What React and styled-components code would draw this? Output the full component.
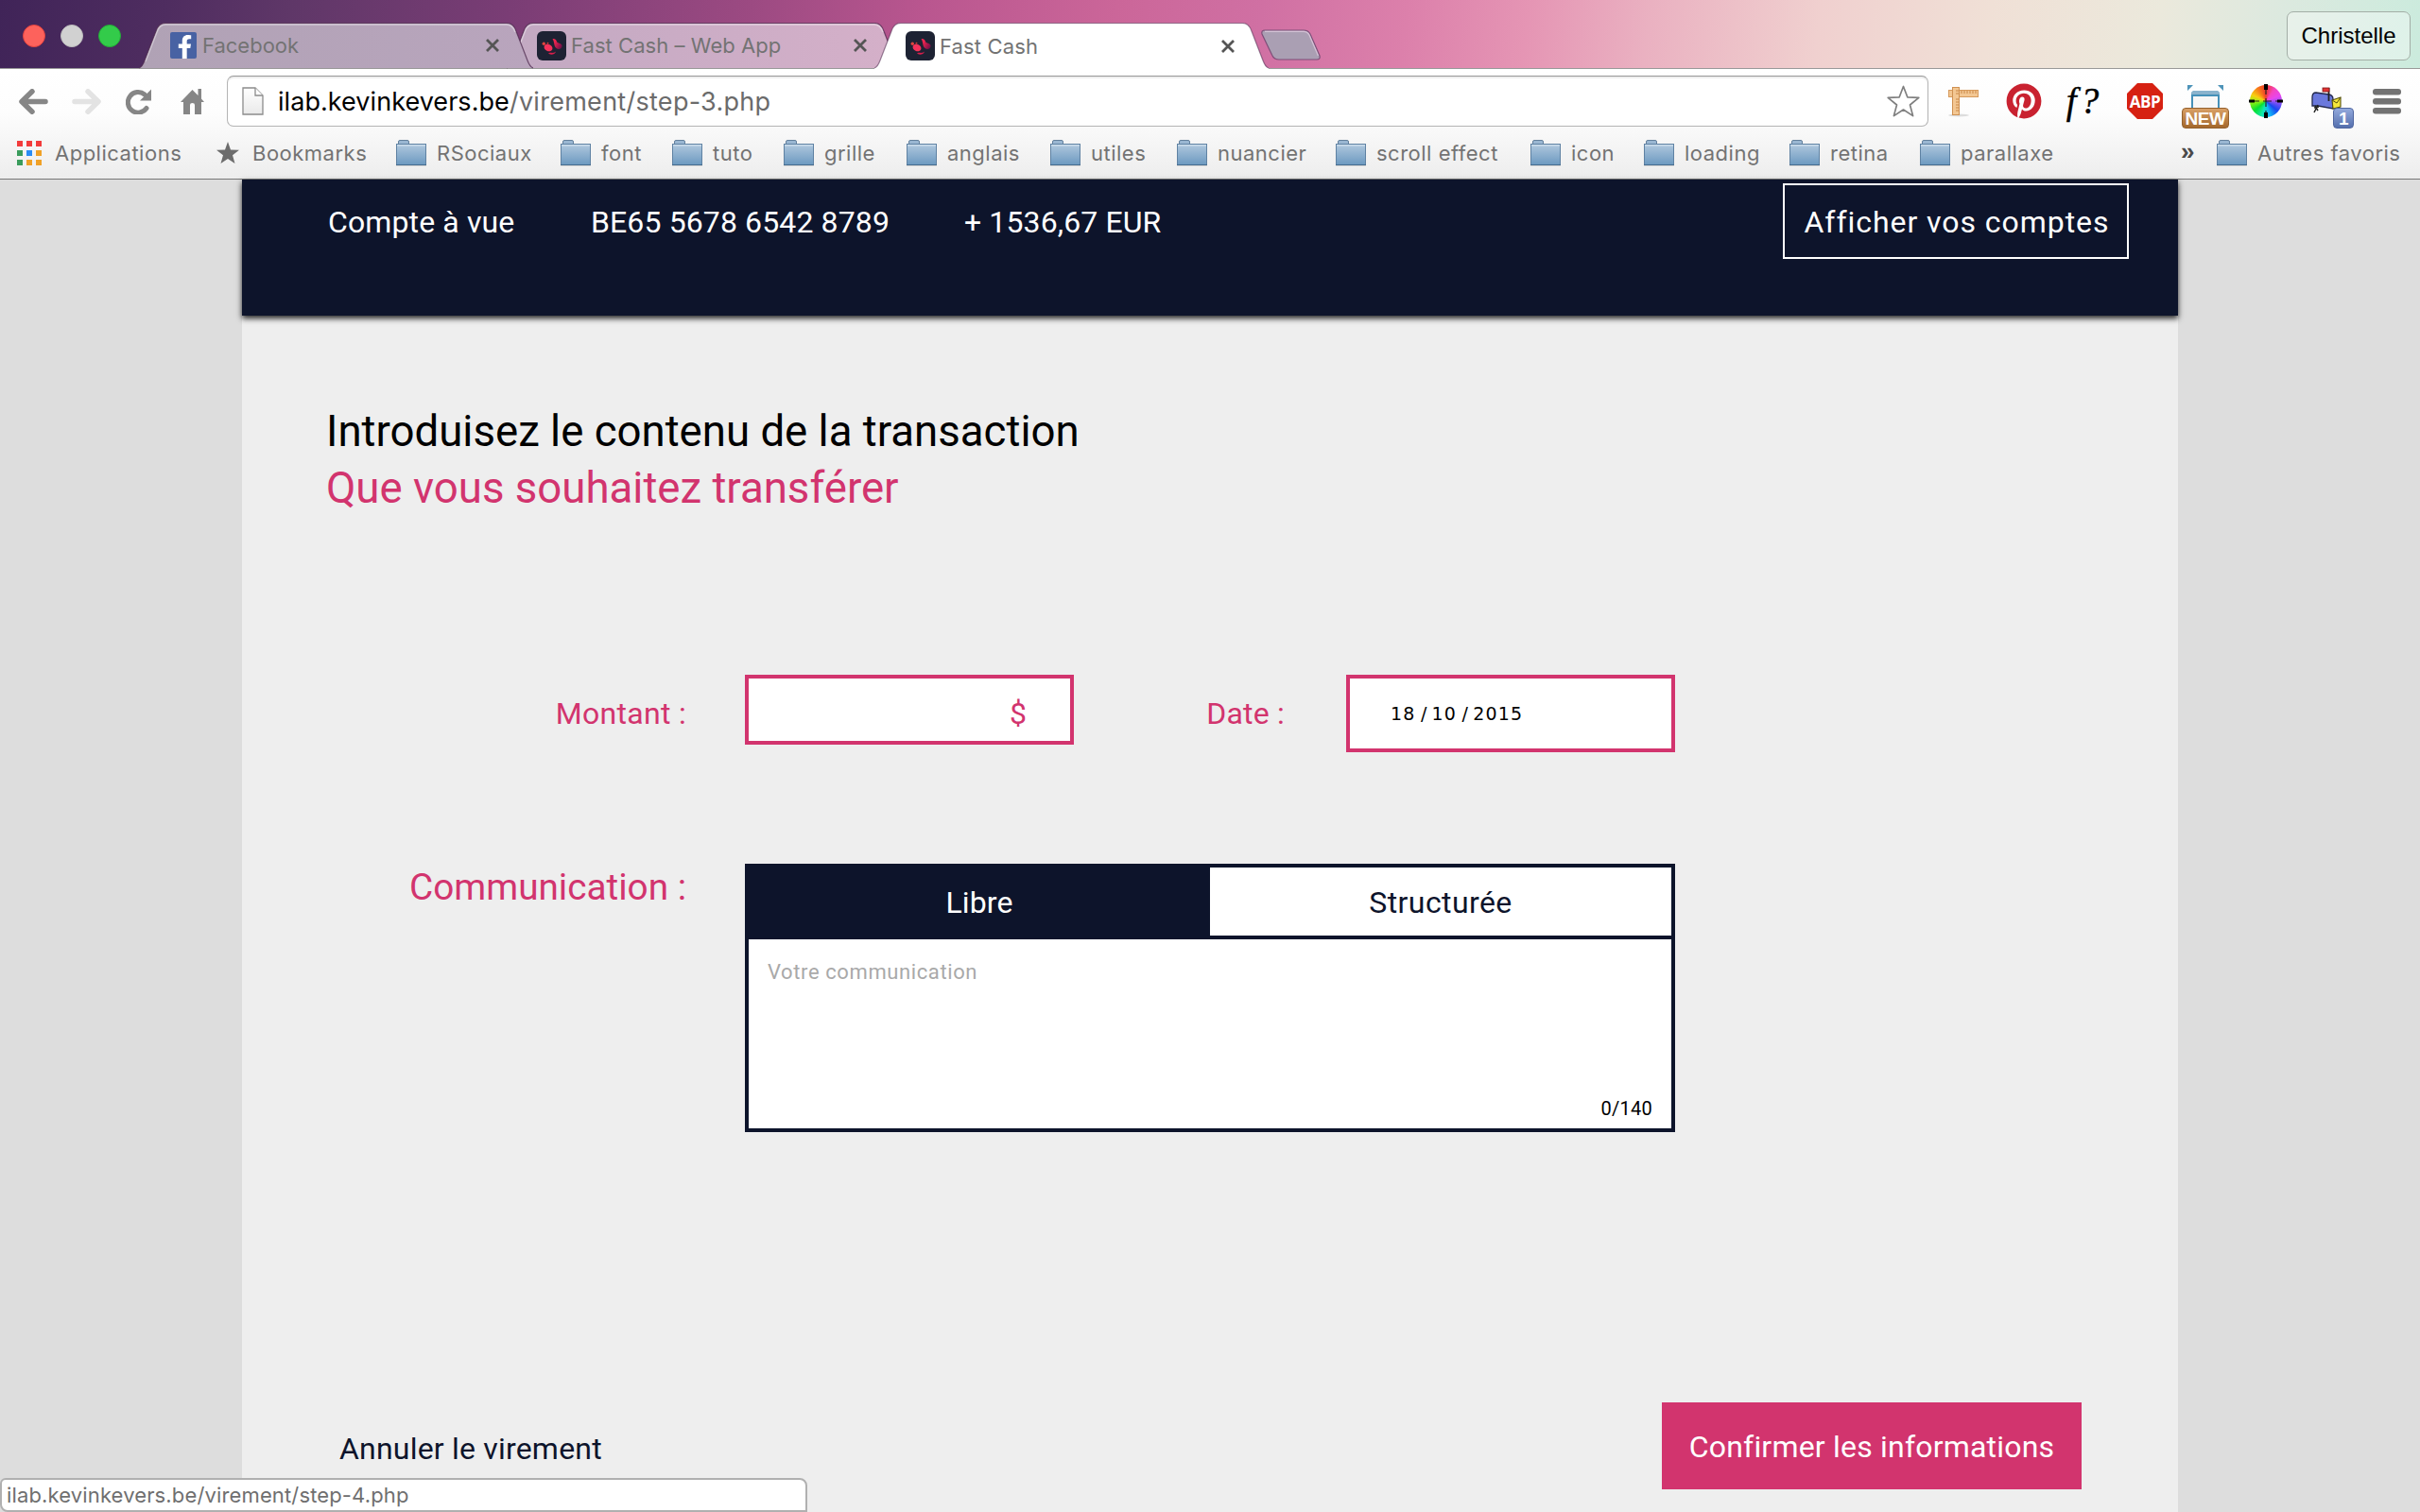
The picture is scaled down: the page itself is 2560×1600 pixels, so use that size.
import React from "react";
import styled, { createGlobalStyle } from "styled-components";
import { FaFacebookF, FaPinterest } from "react-icons/fa";

const NAVY = "#0d142b";
const PINK = "#d2346e";
const UI = `Inter, "Liberation Sans", sans-serif`;
const BODY = `Roboto, "Liberation Sans", sans-serif`;

const GlobalStyle = createGlobalStyle`
  *, *::before, *::after { box-sizing: border-box; }
  html, body { margin: 0; padding: 0; }
  body { background: #ddd; font-family: ${BODY}; overflow: hidden; }
  svg { display: block; flex: none; }
`;

const Window = styled.div`
  width: 2560px;
  height: 1600px;
  overflow: hidden;
  display: flex;
  flex-direction: column;
`;

/* ---------- Tab strip ---------- */

const TabStrip = styled.header`
  height: 72px;
  flex: none;
  display: flex;
  align-items: flex-end;
  background: linear-gradient(
    98deg,
    #402458 0%, #4f2d60 7%, #5f3768 12%, #7a3d75 21%, #9c4a82 31%, #b9568f 38%,
    #cb6699 46%, #d070a3 52%, #dc80ab 58%, #e595b4 63%, #eab1c1 68%, #f0d0cf 75%,
    #f0e0d6 82%, #ebe9dc 89%, #dce9df 94%, #cbebdd 100%
  );
`;

const Lights = styled.div`
  width: 147px;
  height: 72px;
  padding: 26px 0 0 24px;
  display: flex;
  gap: 16px;
`;

const Light = styled.span`
  width: 24px;
  height: 24px;
  border-radius: 50%;
  background: ${(p) => p.$fill};
  border: 1px solid ${(p) => p.$edge};
`;

const TabBox = styled.div`
  position: relative;
  z-index: ${(p) => p.$level};
  width: 417px;
  height: ${(p) => (p.$active ? 49 : 48)}px;
  margin-right: -28px;
  margin-bottom: ${(p) => (p.$active ? -1 : 0)}px;
  padding: 0 35px 0 ${(p) => p.$inset}px;
  display: flex;
  align-items: center;
`;

const TabShape = styled.svg`
  position: absolute;
  left: 0;
  top: 0;
`;

const TabTitle = styled.span`
  position: relative;
  flex: 1;
  padding-left: ${(p) => p.$gap}px;
  font: 22px/30px ${UI};
  letter-spacing: ${(p) => p.$ls}px;
  color: #737373;
  white-space: nowrap;
`;

const Layer = styled.span`
  position: relative;
  display: flex;
`;

const FacebookMark = styled.span`
  position: relative;
  width: 28px;
  height: 28px;
  border-radius: 2px;
  background: #4862a3;
  display: flex;
  justify-content: flex-end;
  align-items: flex-end;
  padding-right: 0;
  overflow: hidden;
  color: #fff;
`;

const NewTab = styled.svg`
  margin: 0 0 8px 19px;
`;

const Profile = styled.button`
  margin: 0 10px 8px auto;
  width: 131px;
  height: 52px;
  padding: 0;
  border: 1px solid #a3aea6;
  border-radius: 7px;
  background: rgba(255, 255, 255, 0.36);
  font: 24px/48px "Liberation Sans", sans-serif;
  color: #000;
`;

/* ---------- Toolbar ---------- */

const Chrome = styled.div`
  height: 118px;
  flex: none;
  border-top: 1px solid #999;
  border-bottom: 1px solid #777;
  background: linear-gradient(#fff 0%, #fdfdfd 40%, #ededed 100%);
`;

const Toolbar = styled.div`
  height: 61px;
  padding: 7px 0 0 7px;
  display: flex;
  align-items: center;
`;

const NavSlot = styled.span`
  width: 56px;
  display: flex;
  justify-content: center;
`;

const Omnibox = styled.div`
  width: 1800px;
  height: 54px;
  margin: 0 5px 0 9px;
  padding: 0 8px 0 15px;
  display: flex;
  align-items: center;
  border: 1px solid #b4b4b4;
  border-top-color: #979797;
  border-radius: 7px;
  background: #fff;
  box-shadow: inset 0 2px 1px #eee;
`;

const Address = styled.span`
  flex: 1;
  padding: 2px 0 0 15px;
  font: 27px/36px ${UI};
  letter-spacing: 0.05px;
  color: #000;
`;

const AddressPath = styled.span`
  letter-spacing: 0.28px;
  color: #6b6b6b;
`;

const ExtSlot = styled.span`
  position: relative;
  width: 64px;
  height: 54px;
  display: flex;
  align-items: center;
  justify-content: center;
`;

const FontQuery = styled.span`
  font: italic 39px/44px "Liberation Serif", serif;
  -webkit-text-stroke: 0.4px #000;
  letter-spacing: 4px;
  color: #000;
`;

const StopLabel = styled.span`
  width: 38px;
  height: 38px;
  clip-path: polygon(29% 0, 71% 0, 100% 29%, 100% 71%, 71% 100%, 29% 100%, 0 71%, 0 29%);
  background: #d62112;
  color: #fff;
  text-align: center;
  font: bold 17px/39px "Open Sans", sans-serif;
  letter-spacing: -0.5px;
`;

const Badge = styled.span`
  position: absolute;
  left: ${(p) => p.$left}px;
  top: 34px;
  width: ${(p) => p.$width}px;
  height: 22px;
  border: 1px solid ${(p) => p.$edge};
  border-radius: 4px;
  background: linear-gradient(${(p) => p.$from}, ${(p) => p.$to});
  color: #fff;
  text-align: center;
  font: bold 19px/21px "Liberation Sans", sans-serif;
  letter-spacing: -0.4px;
`;

const Wheel = styled.span`
  width: 34px;
  height: 34px;
  border-radius: 50%;
  background: conic-gradient(
    #f0382c 0deg, #f545c0 35deg, #e646f0 70deg, #7a50f5 100deg, #1848f0 130deg,
    #10b8f8 165deg, #10e8b0 195deg, #08e030 230deg, #90f010 265deg, #f8d010 295deg,
    #f88018 325deg, #f0382c 360deg
  );
`;

const WheelSpokes = styled.svg`
  position: absolute;
  left: 14px;
  top: 9px;
`;

/* ---------- Bookmarks ---------- */

const BookmarksBar = styled.nav`
  height: 55px;
  padding: 0 22px 0 18px;
  display: flex;
  align-items: center;
`;

const Bookmark = styled.span`
  width: ${(p) => p.$width}px;
  display: flex;
  align-items: center;
  gap: ${(p) => p.$gap ?? 11}px;
  font: 22px/30px ${UI};
  letter-spacing: 0.5px;
  color: #737373;
  white-space: nowrap;
`;

const Overflow = styled.span`
  margin-left: auto;
  width: 38px;
  font: bold 26px/30px "Liberation Sans", sans-serif;
  color: #4a4a4a;
  padding-bottom: 3px;
`;

/* ---------- Page ---------- */

const Page = styled.main`
  width: 2048px;
  flex: 1;
  min-height: 0;
  margin: 0 auto;
  background: #eee;
  font-family: ${BODY};
  font-size: 32px;
`;

const AccountBar = styled.section`
  height: 144px;
  padding: 4px 52px 0 91px;
  display: flex;
  align-items: flex-start;
  background: ${NAVY};
  box-shadow: 0 3px 6px rgba(0, 0, 0, 0.85);
  color: #fff;
`;

const AccountCell = styled.span`
  width: ${(p) => p.$width}px;
  line-height: 82px;
  letter-spacing: 0.12px;
  white-space: nowrap;
`;

const OutlineButton = styled.button`
  margin-left: auto;
  width: 366px;
  height: 80px;
  padding: 0 0 0 2px;
  border: 2px solid #fff;
  background: transparent;
  color: #fff;
  font: 32px/78px ${BODY};
  letter-spacing: 0.95px;
`;

const Heading = styled.h1`
  margin: 0;
  padding: 93px 0 0 89px;
  font-size: 45.6px;
  line-height: 60px;
  font-weight: 400;
  color: #000;
`;

const Accent = styled.span`
  display: block;
  color: ${PINK};
`;

const FormRow = styled.div`
  display: flex;
  align-items: flex-start;
  margin-top: ${(p) => p.$top}px;
`;

const Label = styled.label`
  width: ${(p) => p.$width}px;
  padding-right: ${(p) => p.$gap}px;
  text-align: right;
  font-size: ${(p) => p.$size ?? 32}px;
  line-height: ${(p) => p.$line ?? 82}px;
  letter-spacing: ${(p) => p.$ls ?? 0}px;
  color: ${PINK};
`;

const Field = styled.div`
  width: 348px;
  height: ${(p) => p.$height}px;
  border: 4px solid ${PINK};
  background: #fff;
  display: flex;
`;

const Currency = styled.span`
  margin-left: auto;
  padding-right: 46px;
  line-height: 74px;
  color: ${PINK};
`;

const DateValue = styled.span`
  padding-left: 43px;
  display: flex;
  font: 19px/74px "DejaVu Sans", sans-serif;
  letter-spacing: 1.2px;
  color: #000;
`;

const Slash = styled.span`
  width: 17px;
  text-align: center;
  letter-spacing: 0;
`;

const Message = styled.div`
  width: 984px;
  height: 284px;
  border: 4px solid ${NAVY};
  background: #fff;
  display: flex;
  flex-direction: column;
`;

const Modes = styled.div`
  height: 76px;
  flex: none;
  display: flex;
  border-bottom: 4px solid ${NAVY};
  background: ${NAVY};
`;

const Mode = styled.span`
  flex: 1;
  text-align: center;
  line-height: 74px;
  letter-spacing: ${(p) => (p.$on ? 0.1 : 0.4)}px;
  background: ${(p) => (p.$on ? NAVY : "#fff")};
  color: ${(p) => (p.$on ? "#fff" : NAVY)};
`;

const MessageBody = styled.div`
  flex: 1;
  padding: 20px 20px 5px 20px;
  display: flex;
  flex-direction: column;
  justify-content: space-between;
`;

const Placeholder = styled.span`
  font-size: 22px;
  line-height: 30px;
  letter-spacing: 0.6px;
  color: #a9a9a9;
`;

const Counter = styled.span`
  align-self: flex-end;
  font-size: 20px;
  line-height: 32px;
  letter-spacing: 0.25px;
  color: #000;
`;

const Actions = styled.div`
  margin-top: 286px;
  padding: 0 102px 0 103px;
  display: flex;
  justify-content: space-between;
`;

const CancelLink = styled.a`
  line-height: 98px;
  letter-spacing: 0.2px;
  color: ${NAVY};
`;

const ConfirmButton = styled.button`
  width: 444px;
  height: 92px;
  padding: 2px 0 0;
  border: 0;
  background: ${PINK};
  color: #fff;
  font: 32px/90px ${BODY};
  letter-spacing: 0.2px;
`;

const StatusBubble = styled.div`
  position: fixed;
  left: 0;
  bottom: 0;
  width: 854px;
  height: 36px;
  padding-left: 5px;
  border: 2px solid #b0b0b0;
  border-radius: 6px 8px 0 8px;
  background: #fff;
  font: 22px/33px ${UI};
  letter-spacing: 0.14px;
  color: #6f6f6f;
`;

/* ---------- Drawings ---------- */

const TAB_PATH =
  "M0,48 C3,47 4.5,44 6,40 L18,9 C20,3 23,0.5 28,0.5 L389,0.5 C394,0.5 397,3 399,9 L411,40 C412.5,44 414,47 417,48";

function TabFrame({ id, from, to, active }) {
  return (
    <TabShape width="417" height="49" viewBox="0 0 417 49">
      <defs>
        <linearGradient id={id}>
          <stop offset="0" stopColor={from} />
          <stop offset="1" stopColor={to} />
        </linearGradient>
      </defs>
      <path d={TAB_PATH + (active ? " V49 H0 Z" : " Z")} fill={`url(#${id})`} />
      <path d={TAB_PATH} fill="none" stroke="#4d2a4e" strokeOpacity={active ? 0.55 : 0.75} strokeWidth="1.2" />
      {!active && (
        <path
          d="M7,41 L19,10 C21,4 24,2 28,2 L389,2 C393,2 396,4 398,10"
          fill="none"
          stroke="#fff"
          strokeOpacity="0.4"
          strokeWidth="1.4"
        />
      )}
    </TabShape>
  );
}

function Close() {
  return (
    <Layer>
      <svg width="16" height="16" viewBox="0 0 16 16">
        <path d="M2 2 L14 14 M14 2 L2 14" stroke="#555" strokeWidth="2.8" />
      </svg>
    </Layer>
  );
}

function FastCashMark() {
  return (
    <Layer>
      <svg width="31" height="31" viewBox="0 0 31 31">
        <defs>
          <linearGradient id="wing" x1="0" y1="0" x2="1" y2="0.6">
            <stop offset="0.3" stopColor="#f0244f" />
            <stop offset="1" stopColor="#7a1048" />
          </linearGradient>
        </defs>
        <rect width="31" height="31" rx="6" fill="#1d2233" />
        <path d="M16.5 8 C19 7.5 20.5 9 21.5 12 C24 13 27 13.500 26.500 16 C26 19 23 20 20.500 18 C17.500 15.500 19 12 16.500 8 Z" fill="url(#wing)" />
        <ellipse cx="12" cy="17.5" rx="4.6" ry="3.6" transform="rotate(25 12 17.5)" fill="#f5325a" />
        <circle cx="7.3" cy="13.2" r="1.7" fill="#e0433f" />
        <circle cx="11.5" cy="12.8" r="1" fill="#c93a3a" />
        <path d="M12 23.5 C15 22 17 24 20 21.5 C19 25 14 25.5 12 23.5 Z" fill="#d81e4c" />
      </svg>
    </Layer>
  );
}

const ARROW = "M28 13.5 H3.5 M14 2.8 L3 13.5 L14 24.2";

function Arrow({ color, forward }) {
  return (
    <svg width="31" height="27" viewBox="0 0 31 27">
      <path
        d={ARROW}
        transform={forward ? "translate(31 0) scale(-1 1)" : undefined}
        fill="none"
        stroke={color}
        strokeWidth="5.5"
        strokeLinecap="round"
        strokeLinejoin="round"
      />
    </svg>
  );
}

function Folder() {
  return (
    <svg width="32" height="28" viewBox="0 0 32 28">
      <defs>
        <linearGradient id="folder" x1="0" y1="0" x2="0" y2="1">
          <stop offset="0" stopColor="#b0c8de" />
          <stop offset="1" stopColor="#6c99c0" />
        </linearGradient>
      </defs>
      <path d="M2.5 5 V2 Q2.5 0.5 4 0.5 H12 Q13.5 0.5 13.5 2 V5" fill="#9ab7d2" stroke="#64809c" />
      <rect x="0.5" y="4.5" width="31" height="22" fill="url(#folder)" stroke="#5f82a3" />
      <path d="M1 5.8 H31" stroke="#d3e2ef" strokeWidth="1.2" />
      <path d="M0 26.5 H32" stroke="#456c8f" />
      <path d="M0 27.6 H32" stroke="#ccc" strokeWidth="0.8" />
    </svg>
  );
}

const APP_COLORS = ["#f23b3b", "#f23b3b", "#f23b3b", "#3a9c5c", "#2a8cf5", "#f0a127", "#3a9c5c", "#f0a127", "#f0a127"];

function AppsGrid() {
  return (
    <svg width="26" height="26" viewBox="0 0 26 26">
      {APP_COLORS.map((c, i) => (
        <rect key={i} x={(i % 3) * 10} y={Math.floor(i / 3) * 10} width="6" height="6" fill={c} />
      ))}
    </svg>
  );
}

function Ruler() {
  return (
    <svg width="34" height="34" viewBox="0 0 34 34">
      <ellipse cx="12" cy="32" rx="11" ry="1.5" fill="#ddd" />
      <rect x="1.5" y="5.5" width="31" height="7" fill="#f3c793" stroke="#d69a5c" />
      <rect x="5.5" y="2.5" width="7" height="29" fill="#f3c793" stroke="#cf9152" />
      <path d="M15 6 V9 M18 6 V9 M21 6 V9 M24 6 V9 M27 6 V9 M30 6 V9" stroke="#c98746" />
      <path d="M9 15 H12 M9 18 H12 M9 21 H12 M9 24 H12 M9 27 H12 M9 6 H12 M9 9 H12" stroke="#c98746" />
    </svg>
  );
}

function Frame() {
  return (
    <svg width="40" height="34" viewBox="0 0 40 34">
      <path d="M1 0 H7 L1 6 Z M39 0 H33 L39 6 Z" fill="#4d93b8" />
      <path d="M5 10 Q5 6 9 6 H31 Q35 6 35 10 V34 H5 Z" fill="#4590b8" />
      <path d="M5 10 Q5 6 9 6 H31 Q35 6 35 10 H5 Z" fill="#8ab3cd" />
      <rect x="7" y="12" width="26" height="22" fill="#f7f7f7" />
    </svg>
  );
}

function Mailbox() {
  return (
    <svg width="34" height="30" viewBox="0 0 34 30">
      <path d="M2 20 V11 Q2 6 6 6 L20 8 Q24 9 24 13 V23 L8 20 Z" fill="#6a78dc" stroke="#22284d" strokeWidth="1.3" />
      <path d="M23 14 L32 11 V21 L24 23 Z" fill="#f5e63a" stroke="#55500c" strokeWidth="1.1" />
      <path d="M23 14 L28 17 L32 11" fill="none" stroke="#55500c" />
      <path d="M19.5 1 V15" stroke="#222" strokeWidth="1.8" />
      <rect x="13" y="1" width="7" height="4" fill="#e23333" stroke="#7c1616" strokeWidth="0.8" />
      <path d="M5 20 L8 25 M8 19 L4 27 M4 22 L9 21" stroke="#222" strokeWidth="1.5" />
    </svg>
  );
}

/* ---------- Data ---------- */

const FOLDERS = [
  ["RSociaux", 174],
  ["font", 118],
  ["tuto", 118],
  ["grille", 130],
  ["anglais", 152],
  ["utiles", 134],
  ["nuancier", 168],
  ["scroll effect", 206],
  ["icon", 120],
  ["loading", 154],
  ["retina", 138],
  ["parallaxe", 160],
];

export default function App() {
  return (
    <Window>
      <GlobalStyle />
      <TabStrip>
        <Lights>
          <Light $fill="#fd625c" $edge="#e5433f" />
          <Light $fill="#d1d1d1" $edge="#bdbdbd" />
          <Light $fill="#33cb4a" $edge="#23ae37" />
        </Lights>
        <TabBox $level={3} $inset={33}>
          <TabFrame id="t1" from="#b0a2b5" to="#b9a5bd" />
          <FacebookMark><FaFacebookF size={25} /></FacebookMark>
          <TabTitle $gap={6} $ls={0}>Facebook</TabTitle>
          <Close />
        </TabBox>
        <TabBox $level={2} $inset={32}>
          <TabFrame id="t2" from="#c2a9c2" to="#d5b0c9" />
          <FastCashMark />
          <TabTitle $gap={5} $ls={0.05}>Fast Cash – Web App</TabTitle>
          <Close />
        </TabBox>
        <TabBox $level={4} $inset={33} $active>
          <TabFrame id="t3" from="#fff" to="#fff" active />
          <FastCashMark />
          <TabTitle $gap={5} $ls={0.15}>Fast Cash</TabTitle>
          <Close />
        </TabBox>
        <NewTab width="66" height="33" viewBox="0 0 66 33">
          <path d="M5 1 H46 Q51 1 53 5 L63 28 Q64 32 60 32 H20 Q15 32 13 28 L2 5 Q1 1 5 1 Z" fill="#aa9fb3" stroke="#7d4f78" strokeWidth="1.2" />
          <path d="M5 2.3 H46 Q50 2.3 52 6 L61.5 28" fill="none" stroke="#d5c3d6" strokeWidth="1.2" />
        </NewTab>
        <Profile>Christelle</Profile>
      </TabStrip>

      <Chrome>
        <Toolbar>
          <NavSlot><Arrow color="#868686" /></NavSlot>
          <NavSlot><Arrow color="#e3e3e3" forward /></NavSlot>
          <NavSlot>
            <svg width="28" height="27" viewBox="0 0 28 27">
              <path d="M20 6 A10.8 10.8 0 1 0 22 20.5" fill="none" stroke="#868686" strokeWidth="5" strokeLinecap="round" />
              <path d="M27 0.5 V12.5 H15 Z" fill="#868686" />
            </svg>
          </NavSlot>
          <NavSlot>
            <svg width="25" height="27" viewBox="0 0 25 27">
              <path d="M12.5 1 L18.5 7 V0 H22 V10.5 L25 14 H22 V27 H15 V17 Q15 15 12.5 15 Q10 15 10 17 V27 H3 V14 H0 Z" fill="#868686" />
            </svg>
          </NavSlot>
          <Omnibox>
            <svg width="23" height="30" viewBox="0 0 23 30">
              <defs>
                <linearGradient id="doc" x1="0" y1="0" x2="0" y2="1">
                  <stop offset="0" stopColor="#fff" />
                  <stop offset="1" stopColor="#e9e9e9" />
                </linearGradient>
              </defs>
              <path d="M1 1 H14 L22 9 V29 H1 Z" fill="url(#doc)" stroke="#8c8c8c" strokeWidth="1.3" />
              <path d="M14 1 V9 H22" fill="#fff" stroke="#8c8c8c" strokeWidth="1.3" />
            </svg>
            <Address>ilab.kevinkevers.be<AddressPath>/virement/step-3.php</AddressPath></Address>
            <svg width="35" height="35" viewBox="0 0 35 35">
              <path d="M17.5 1.5 L21.8 12.8 L33.8 13.4 L24.5 21 L27.6 32.6 L17.5 26 L7.4 32.6 L10.5 21 L1.2 13.4 L13.2 12.8 Z" fill="#fff" stroke="#7f7f7f" strokeWidth="1.7" strokeLinejoin="round" />
            </svg>
          </Omnibox>
          <ExtSlot><Ruler /></ExtSlot>
          <ExtSlot><FaPinterest size={38} color="#c92230" /></ExtSlot>
          <ExtSlot><FontQuery>f?</FontQuery></ExtSlot>
          <ExtSlot><StopLabel>ABP</StopLabel></ExtSlot>
          <ExtSlot>
            <Frame />
            <Badge $left={7} $width={50} $from="#d9a066" $to="#a4682c" $edge="#94602c">NEW</Badge>
          </ExtSlot>
          <ExtSlot>
            <Wheel />
            <WheelSpokes width="36" height="36" viewBox="0 0 36 36">
              <path d="M18 2 V34 M2 18 H34" stroke="#222" strokeWidth="1.2" strokeDasharray="9 4" />
              <path d="M16 0 H20 V6 H16 Z M16 30 H20 V36 H16 Z M0 16.5 H6 V19.5 H0 Z M30 16.5 H36 V19.5 H30 Z" fill="#000" />
            </WheelSpokes>
          </ExtSlot>
          <ExtSlot>
            <Mailbox />
            <Badge $left={39} $width={22} $from="#93a9dc" $to="#5570ae" $edge="#4f66a0">1</Badge>
          </ExtSlot>
          <ExtSlot>
            <svg width="30" height="27" viewBox="0 0 30 27">
              {[0, 10, 20].map((y) => (
                <rect key={y} y={y} width="30" height="6.5" rx="3" fill="#737373" />
              ))}
            </svg>
          </ExtSlot>
        </Toolbar>
        <BookmarksBar>
          <Bookmark $width={211} $gap={14}><AppsGrid />Applications</Bookmark>
          <Bookmark $width={190} $gap={14}>
            <svg width="24" height="24" viewBox="0 0 24 24">
              <path d="M12 0 L15 8.5 L24 8.7 L17 14.3 L19.5 23 L12 18 L4.5 23 L7 14.3 L0 8.7 L9 8.5 Z" fill="#6c6c6c" />
            </svg>
            Bookmarks
          </Bookmark>
          {FOLDERS.map(([name, width]) => (
            <Bookmark key={name} $width={width}><Folder />{name}</Bookmark>
          ))}
          <Overflow>»</Overflow>
          <Bookmark $width={193} $gap={11}><Folder />Autres favoris</Bookmark>
        </BookmarksBar>
      </Chrome>

      <Page>
        <AccountBar>
          <AccountCell $width={278}>Compte à vue</AccountCell>
          <AccountCell $width={395}>BE65 5678 6542 8789</AccountCell>
          <AccountCell $width={230}>+ 1536,67 EUR</AccountCell>
          <OutlineButton>Afficher vos comptes</OutlineButton>
        </AccountBar>
        <Heading>
          Introduisez le contenu de la transaction
          <Accent>Que vous souhaitez transférer</Accent>
        </Heading>
        <FormRow $top={167}>
          <Label $width={532} $gap={62} $ls={0.3}>Montant :</Label>
          <Field $height={74}><Currency>$</Currency></Field>
          <Label $width={288} $gap={65} $ls={0.2}>Date :</Label>
          <Field $height={82}>
            <DateValue>18<Slash>/</Slash>10<Slash>/</Slash>2015</DateValue>
          </Field>
        </FormRow>
        <FormRow $top={118}>
          <Label $width={532} $gap={62} $size={38.7} $line={50}>Communication :</Label>
          <Message>
            <Modes>
              <Mode $on>Libre</Mode>
              <Mode>Structurée</Mode>
            </Modes>
            <MessageBody>
              <Placeholder>Votre communication</Placeholder>
              <Counter>0/140</Counter>
            </MessageBody>
          </Message>
        </FormRow>
        <Actions>
          <CancelLink>Annuler le virement</CancelLink>
          <ConfirmButton>Confirmer les informations</ConfirmButton>
        </Actions>
      </Page>
      <StatusBubble>ilab.kevinkevers.be/virement/step-4.php</StatusBubble>
    </Window>
  );
}
